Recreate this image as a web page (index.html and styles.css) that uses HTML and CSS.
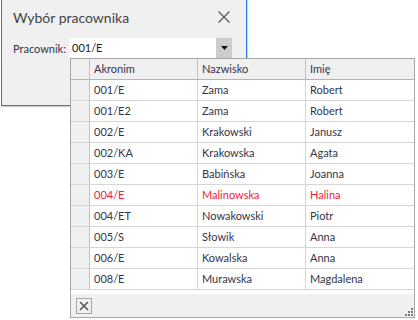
FILE: index.html
```html
<!DOCTYPE html>
<html lang="pl">
<head>
  <meta charset="UTF-8" />
  <title>Wybór pracownika</title>
  <link rel="stylesheet" href="styles.css">
</head>
<body>

<!-- Okno wyboru -->
<div class="dialog">
  <div class="dialog-head">
    <span class="title">Wybór pracownika</span>
    <svg class="close" width="12" height="12" viewBox="0 0 12 12">
      <path d="M0.5 0.5 L11.5 11.5 M11.5 0.5 L0.5 11.5" stroke="#555" stroke-width="1.2" fill="none"/>
    </svg>
  </div>
  <div class="field">
    <span class="label">Pracownik:</span>
    <div class="combo">
      <span class="combo-text">001/E</span>
      <span class="combo-btn">
        <svg width="7" height="4" viewBox="0 0 7 4"><path d="M0 0 H7 L3.5 4 Z" fill="#111"/></svg>
      </span>
    </div>
  </div>
</div>

<!-- Lista rozwijana -->
<div class="popup">
  <div class="row head">
    <div class="cell ind"></div>
    <div class="cell">Akronim</div>
    <div class="cell">Nazwisko</div>
    <div class="cell">Imię</div>
  </div>
  <div class="row"><div class="cell ind"></div><div class="cell">001/E</div><div class="cell">Zama</div><div class="cell">Robert</div></div>
  <div class="row"><div class="cell ind"></div><div class="cell">001/E2</div><div class="cell">Zama</div><div class="cell">Robert</div></div>
  <div class="row"><div class="cell ind"></div><div class="cell">002/E</div><div class="cell">Krakowski</div><div class="cell">Janusz</div></div>
  <div class="row"><div class="cell ind"></div><div class="cell">002/KA</div><div class="cell">Krakowska</div><div class="cell">Agata</div></div>
  <div class="row"><div class="cell ind"></div><div class="cell">003/E</div><div class="cell">Babińska</div><div class="cell">Joanna</div></div>
  <div class="row red"><div class="cell ind"></div><div class="cell">004/E</div><div class="cell">Malinowska</div><div class="cell">Halina</div></div>
  <div class="row"><div class="cell ind"></div><div class="cell">004/ET</div><div class="cell">Nowakowski</div><div class="cell">Piotr</div></div>
  <div class="row"><div class="cell ind"></div><div class="cell">005/S</div><div class="cell">Słowik</div><div class="cell">Anna</div></div>
  <div class="row"><div class="cell ind"></div><div class="cell">006/E</div><div class="cell">Kowalska</div><div class="cell">Anna</div></div>
  <div class="row"><div class="cell ind"></div><div class="cell">008/E</div><div class="cell">Murawska</div><div class="cell">Magdalena</div></div>
  <div class="spacer"></div>
  <div class="foot">
    <span class="clear">
      <svg width="10" height="10" viewBox="0 0 10 10">
        <path d="M1 1 L9 9 M9 1 L1 9" stroke="#555" stroke-width="1.5" fill="none"/>
      </svg>
    </span>
    <svg class="grip" width="9" height="9" viewBox="0 0 9 9">
      <rect x="7" y="1" width="2" height="2" fill="#7a7a7a"/>
      <rect x="4" y="4" width="2" height="2" fill="#7a7a7a"/>
      <rect x="7" y="4" width="2" height="2" fill="#7a7a7a"/>
      <rect x="1" y="7" width="2" height="2" fill="#7a7a7a"/>
      <rect x="4" y="7" width="2" height="2" fill="#7a7a7a"/>
      <rect x="7" y="7" width="2" height="2" fill="#7a7a7a"/>
    </svg>
  </div>
</div>

</body>
</html>
```

FILE: styles.css
```css
:root {
  --text: #34344a;
  --red: #f01e3c;
  --panel: #f0f0f0;
  --line: #d6d6d6;
  --blue: #2b7bd3;
}

body {
  margin: 0;
  background: #fff;
  font-family: Lato, "Noto Sans", sans-serif;
  font-size: 11px;
  color: var(--text);
  position: relative;
  width: 418px;
  height: 320px;
  overflow: hidden;
}

.dialog {
  box-sizing: border-box;
  width: 246px;
  height: 107px;
  margin: -1px 0 0 1px;
  background: var(--panel);
  border: 1px solid var(--blue);
  box-shadow: 1px 1px 1px rgba(0,0,0,0.18);
}

.dialog-head {
  display: flex;
  align-items: center;
  justify-content: space-between;
  height: 33px;
  padding: 0 16px 0 11px;
}

.title {
  font-size: 14px;
  color: #444;
  margin-top: 2px;
}

.close {
  margin-top: 1px;
}

.field {
  display: flex;
  align-items: center;
  padding: 5px 0 0 11px;
}

.label {
  width: 56px;
}

.combo {
  display: flex;
  width: 163px;
  height: 20px;
  background: #fff;
}

.combo-text {
  flex: 1;
  line-height: 20px;
  padding-left: 3px;
  color: #222;
}

.combo-btn {
  width: 16px;
  background: #cdcdcd;
  display: flex;
  align-items: center;
  justify-content: center;
}

/* lista */
.popup {
  position: absolute;
  left: 70px;
  top: 58px;
  box-sizing: border-box;
  width: 345px;
  height: 260px;
  background: #fff;
  border: 1px solid #a6a6a6;
}

.row {
  display: grid;
  grid-template-columns: 19px 108px 108px 1fr;
  height: 21px;
  border-bottom: 1px solid var(--line);
  box-sizing: border-box;
}

.row.head {
  background: var(--panel);
  border-bottom-color: #b4b4b4;
}

.cell {
  border-right: 1px solid var(--line);
  padding-left: 4px;
  line-height: 20px;
  white-space: nowrap;
}

.cell:last-child {
  border-right: none;
}

.row.head .cell {
  border-right-color: #c2c2c2;
}

.cell.ind {
  background: var(--panel);
  border-right-color: #c2c2c2;
  padding: 0;
}

.row.red .cell {
  color: var(--red);
}

.spacer {
  height: 4px;
}

.foot {
  position: relative;
  height: 23px;
  background: var(--panel);
  display: flex;
  align-items: center;
  padding-left: 5px;
}

.clear {
  box-sizing: border-box;
  width: 16px;
  height: 16px;
  border: 1px solid #a6a6a6;
  display: flex;
  align-items: center;
  justify-content: center;
}

.grip {
  position: absolute;
  right: 1px;
  bottom: 1px;
}
```
